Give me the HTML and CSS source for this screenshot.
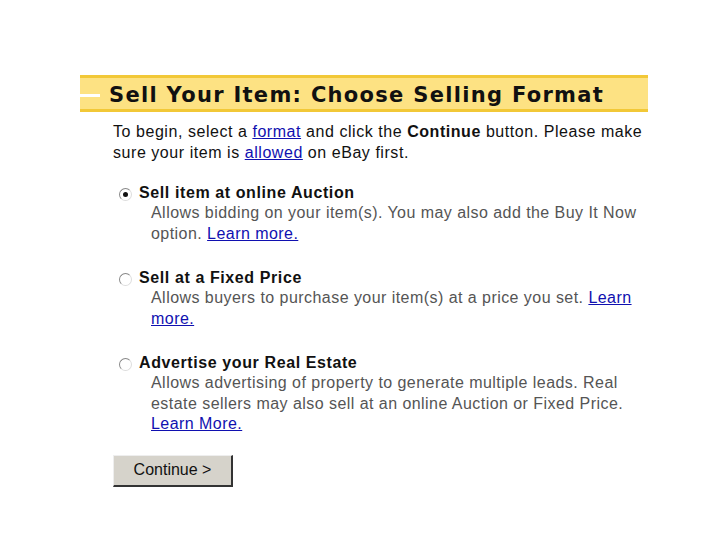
FILE: index.html
```html
<!DOCTYPE html>
<html>
<head>
<meta charset="utf-8">
<link rel="stylesheet" href="styles.css">
</head>
<body>
<div class="page">
  <div class="header">
    <span class="dash"></span>
    <h1 class="title">Sell Your Item: Choose Selling Format</h1>
  </div>
  <div class="content">
    <p class="intro">To begin, select a <a href="#">format</a> and click the <b>Continue</b> button. Please make sure your item is <a href="#">allowed</a> on eBay first.</p>
    <div class="option">
      <span class="radio checked"></span>
      <div class="opt-body">
        <div class="opt-title">Sell item at online Auction</div>
        <div class="opt-desc">Allows bidding on your item(s). You may also add the Buy It Now option. <a href="#">Learn more.</a></div>
      </div>
    </div>
    <div class="option">
      <span class="radio"></span>
      <div class="opt-body">
        <div class="opt-title">Sell at a Fixed Price</div>
        <div class="opt-desc">Allows buyers to purchase your item(s) at a price you set. <a href="#">Learn more.</a></div>
      </div>
    </div>
    <div class="option">
      <span class="radio"></span>
      <div class="opt-body">
        <div class="opt-title">Advertise your Real Estate</div>
        <div class="opt-desc">Allows advertising of property to generate multiple leads. Real estate sellers may also sell at an online Auction or Fixed Price. <a href="#">Learn More.</a></div>
      </div>
    </div>
    <button class="continue">Continue &gt;</button>
  </div>
</div>
</body>
</html>
```
FILE: styles.css
```css
html, body {
  margin: 0;
  padding: 0;
  background: #fff;
}
.page {
  padding: 75px 0 0 80px;
  width: 568px;
  font-family: "Liberation Sans", Arial, sans-serif;
}
.header {
  display: flex;
  align-items: center;
  height: 31px;
  background: #fde283;
  border-top: 3px solid #f2c837;
  border-bottom: 3px solid #f2c837;
}
.dash {
  width: 20px;
  height: 3px;
  margin-top: 3px;
  background: #fff;
  margin-right: 9px;
}
.title {
  margin: 3px 0 0;
  font-family: "DejaVu Sans", Verdana, sans-serif;
  font-weight: bold;
  font-size: 21px;
  line-height: 26px;
  color: #111;
  letter-spacing: 1.3px;
}
.content {
  padding: 9px 0 0 33px;
}
.intro {
  margin: 0 0 19px;
  font-size: 16px;
  line-height: 21px;
  color: #111;
  width: 530px;
  letter-spacing: 0.55px;
}
a {
  color: #1010b0;
  text-decoration: underline;
}
.option {
  display: flex;
  align-items: flex-start;
  margin: 0 0 23px 6px;
}
.radio {
  flex: none;
  width: 11px;
  height: 11px;
  border-radius: 50%;
  border: 1px solid #888;
  border-right-color: #ddd;
  border-bottom-color: #ddd;
  background: #fff;
  margin: 6px 7px 0 0;
  position: relative;
}
.radio.checked::after {
  content: "";
  position: absolute;
  left: 3px;
  top: 3px;
  width: 5px;
  height: 5px;
  border-radius: 50%;
  background: #111;
}
.opt-title {
  font-size: 16px;
  font-weight: bold;
  line-height: 21px;
  color: #111;
  letter-spacing: 0.6px;
}
.opt-desc {
  margin-left: 12px;
  font-size: 16px;
  line-height: 20.5px;
  color: #555;
  width: 495px;
  letter-spacing: 0.45px;
}
.continue {
  display: block;
  margin-top: -3px;
  width: 120px;
  height: 32px;
  font-family: "Liberation Sans", Arial, sans-serif;
  font-size: 16px;
  color: #111;
  background: #d6d3cb;
  border-style: solid;
  border-color: #eee #333 #333 #eee;
  border-width: 1px 2px 2px 1px;
  padding: 0;
}
```
